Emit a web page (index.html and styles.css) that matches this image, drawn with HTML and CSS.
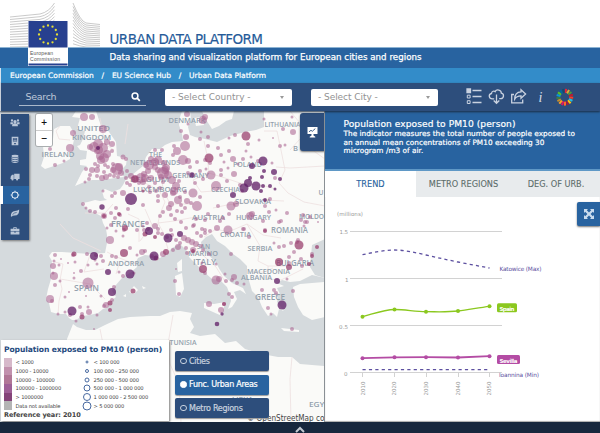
FILE: index.html
```html
<!DOCTYPE html>
<html lang="en">
<head>
<meta charset="utf-8">
<title>Urban Data Platform</title>
<link rel="stylesheet" href="styles.css">
</head>
<body>
<header class="masthead">
  <svg class="logo" width="100" height="67" viewBox="0 0 100 67">
    <clipPath id="above-band"><rect width="100" height="47"/></clipPath>
    <g id="logo-lines" clip-path="url(#above-band)"></g>
    <rect x="28" y="21" width="40" height="45" fill="#fff"/>
    <rect x="28.5" y="21" width="39" height="26.500" fill="#27408f"/>
    <rect x="28.500" y="63.500" width="39" height="2" fill="#27408f"/>
    <g id="stars" fill="#e8e034"></g>
    <text x="30" y="54.500" textLength="23">European</text>
    <text x="30" y="60.500" textLength="30">Commission</text>
  </svg>
  <h1 class="title">URBAN DATA PLATFORM</h1>
  <p class="tagline">Data sharing and visualization platform for European cities and regions</p>
</header>
<nav class="crumbs"><a>European Commission</a><i>/</i><a>EU Science Hub</a><i>/</i><a>Urban Data Platform</a></nav>
<div class="toolbar">
  <div class="search"><span>Search</span>
    <svg width="10" height="10" viewBox="0 0 10 10" fill="none" stroke="#fff"><circle cx="4" cy="4" r="2.900" stroke-width="1.500"/><path d="M6.200 6.200L8.800 8.800" stroke-width="1.800"/></svg>
  </div>
  <div class="select country"><span>- Select Country -</span><b></b></div>
  <div class="select city"><span>- Select City -</span><b></b></div>
  <svg class="tools" width="110" height="22" viewBox="465 87 110 22" fill="none" stroke="#c9d2e0" stroke-width="1.300">
    <path d="M472.500 91.500h9M472.500 97.500h9M472.500 103.500h9"/>
    <path d="M467 90h3.500v3.500h-3.500z" fill="#c9d2e0"/><path d="M467.300 96.200h2.800v2.800h-2.800zM467.300 101.700h2.800v2.800h-2.800z" stroke-width="1"/>
    <path d="M494.200 99.800h-1.700c-4 0-4.200-4.800-1-5.300c.2-2.500 2.800-2.900 3.600-1.900c1.500-2.800 6.200-1.900 6.200 1.500c3.300.6 2.700 5.500-.6 5.500h-1.500M496.500 95.500v8.500M493.700 101.500l2.800 2.800l2.800-2.800"/>
    <path d="M514 95.500h-2.300v8.300h11v-3.300"/><path d="M521 90.700l4.600 4.300l-4.600 4.300v-2.400c-3 0-5 .9-6.300 3.200c0-4.300 2.300-7 6.300-7.200z"/>
    <text x="538.500" y="102.500">i</text>
    <g id="wheel" stroke-width="4"></g>
  </svg>
</div>
<main class="workspace">
  <section class="map">
    <svg class="canvas" width="325" height="311" viewBox="0 112 325 311">
      <rect y="112" width="325" height="311" fill="#d5dadd"/>
      <g fill="#fafaf8">
        <path d="M76 112L72 118L80 119L77 130L85 132L83 140L80 146L77 147L80 151L87 152L86 160L80 161L80 166L87 167L82 173L75 187L82 184L92 181L103 181L115 179L124 178L120 172L126 166L127 159L117 157L116 143L107 130L101 127L96 112z"/>
        <path d="M60 127L70 127L75 136L72 150L70 160L63 164L45 170L41 167L44 158L43 147L53 140L54 130z"/>
        <path d="M182 112L180 118L179 126L182 135L183 142L172 143L165 146L160 150L152 150L146 158L143 167L138 171L132 176L126 180L123 186L120 190L112 193L105 190L102 192L104 199L107 201L100 202L95 201L88 203L82 204L84 207L88 211L95 214L101 217L103 224L106 230L107 236L107 244L105 254L90 255L76 254L62 253L52 253L49 257L52 262L51 270L51 280L48 290L46 300L49 304L51 313L58 315L66 315L69 319L72 321L76 321L82 317L90 316L98 314L103 310L108 308L110 303L116 298L112 292L115 287L122 279L130 274L137 268L136 263L138 259L145 256L153 257L160 259L167 254L172 249L180 245L188 253L189 258L196 265L203 272L212 280L220 281L227 288L230 296L231 302L228 310L232 308L237 300L234 293L240 291L246 295L243 289L232 284L224 277L220 271L215 262L206 254L202 250L201 243L206 238L212 235L217 242L225 247L233 255L240 260L247 267L247 275L250 285L252 292L258 298L262 308L268 317L273 314L277 318L279 310L284 312L277 303L278 299L273 293L280 295L277 289L284 287L277 284L282 281L290 283L300 282L312 276L325 279V240L315 248L312 257L311 268L316 276L325 279V112H264L264 128L256 131L245 133L230 137L217 143L205 140L195 138L190 136L188 128L191 120L190 112z"/>
        <path d="M202 112L205 119L212 130L219 127L226 122L232 120L234 112zM194 119L202 118L204 126L196 127zM310 240L325 240V246L311 262z"/>
        <path d="M293 288L300 285L325 283V318L312 321L303 316L298 308L294 298z"/>
        <path d="M60 423L67 340L73 325L77 328L86 331L95 331L105 326L118 320L130 318L150 317L160 317L170 313L180 312L192 314L190 320L194 328L190 334L200 337L215 335L225 344L236 342L245 350L262 355L278 358L292 358L300 365L325 367V423z"/>
        <path d="M175 277L182 274L184 290L180 298L176 296zM177 264L182 260L182 272L178 273zM204 304L214 305L225 303L222 317L213 313L204 309zM129 293L134 287L138 291L134 295zM281 329L290 330L299 331L299 333L284 332zM142 287L146 289L143 290zM123 297l3 -2l0 3z"/>
      </g>
      <path d="M312 246L325 240V279L315 276L310 268z" fill="#d5dadd"/>
      <path class="borders" d="M107 253L117 258L127 262L137 265M55 263L63 265L60 281L62 290L59 302L58 315M136 179L143 183L153 188L160 193L165 203L160 215L158 224L163 233L168 250M147 167L153 171L161 174L163 190L170 205L186 205L194 205M204 142L207 156L209 174L193 181L201 193L213 192M209 174L225 179L240 184L265 187L276 190M264 132L277 132L282 156L285 171L279 184L288 194L304 203L325 207M213 209L227 206L243 204L263 201L284 202M204 238L216 230L228 233L247 225L263 236L281 239M247 225L260 247L258 262L268 267L286 267L302 263M252 273L264 273L273 269M268 267L268 280L281 281L303 270M290 112L305 130L308 148L325 160M276 168L290 169L325 167M300 140L290 151M60 127L56 132L59 140L70 141M158 224L174 222L190 219L205 218M60 225L73 239L101 252M128 215L139 220L139 243M145 210L152 226L140 242M85 214L105 214L113 205M100 330L103 345M173 316L168 345L170 365L179 385L181 423M292 358L290 380L291 423M60 280L90 285L105 300M90 256L84 273L104 270M120 262L116 275M195 249L216 268L226 284M180 240L195 248M128 125L125 145M100 119L105 145L114 151"/>
      <g class="labels">
        <text x="77" y="132" textLength="33" lengthAdjust="spacingAndGlyphs">UNITED</text><text x="72" y="140.500" textLength="39" lengthAdjust="spacingAndGlyphs">KINGDOM</text>
        <text x="41.500" y="158" textLength="33" lengthAdjust="spacingAndGlyphs">IRELAND</text><text x="168.500" y="123.500" textLength="37" lengthAdjust="spacingAndGlyphs">DENMARK</text>
        <text x="264.500" y="128" textLength="36" lengthAdjust="spacingAndGlyphs">LITHUANIA</text><text x="149" y="158" textLength="13" lengthAdjust="spacingAndGlyphs">THE</text>
        <text x="130" y="165.500" textLength="50" lengthAdjust="spacingAndGlyphs">NETHERLANDS</text><text x="130" y="183" textLength="39" lengthAdjust="spacingAndGlyphs">BELGIUM</text>
        <text x="133" y="192.500" textLength="54" lengthAdjust="spacingAndGlyphs">LUXEMBOURG</text><text x="172" y="179" textLength="37" lengthAdjust="spacingAndGlyphs">GERMANY</text>
        <text x="233" y="167.500" textLength="29" lengthAdjust="spacingAndGlyphs">POLAND</text><text x="211" y="192.500" textLength="29" lengthAdjust="spacingAndGlyphs">CZECHIA</text>
        <text x="235" y="204.500" textLength="36" lengthAdjust="spacingAndGlyphs">SLOVAKIA</text><text x="111" y="227.500" textLength="34" lengthAdjust="spacingAndGlyphs" class="lg">FRANCE</text>
        <text x="192" y="221" textLength="33" lengthAdjust="spacingAndGlyphs">AUSTRIA</text><text x="236" y="221" textLength="35" lengthAdjust="spacingAndGlyphs">HUNGARY</text>
        <text x="299" y="220" textLength="25" lengthAdjust="spacingAndGlyphs">MOLDO</text><text x="293" y="151.500" textLength="5" lengthAdjust="spacingAndGlyphs">B</text><text x="318.500" y="196" textLength="5" lengthAdjust="spacingAndGlyphs">U</text>
        <text x="271" y="233.500" textLength="37" lengthAdjust="spacingAndGlyphs" class="lg">ROMANIA</text><text x="220" y="237.500" textLength="31" lengthAdjust="spacingAndGlyphs">CROATIA</text>
        <text x="247.500" y="251.500" textLength="25" lengthAdjust="spacingAndGlyphs">SERBIA</text><text x="197" y="250" textLength="13" lengthAdjust="spacingAndGlyphs">SAN</text><text x="188" y="256.800" textLength="30" lengthAdjust="spacingAndGlyphs">MARINO</text>
        <text x="193" y="266" textLength="23" lengthAdjust="spacingAndGlyphs" class="lg">ITALY</text><text x="276" y="267" textLength="38" lengthAdjust="spacingAndGlyphs" class="lg">BULGARIA</text>
        <text x="247" y="275" textLength="43" lengthAdjust="spacingAndGlyphs">MACEDONIA</text><text x="241" y="281" textLength="31" lengthAdjust="spacingAndGlyphs">ALBANIA</text>
        <text x="255" y="300.500" textLength="30" lengthAdjust="spacingAndGlyphs" class="lg">GREECE</text><text x="108" y="267" textLength="36" lengthAdjust="spacingAndGlyphs">ANDORRA</text>
        <text x="74" y="291.500" textLength="25" lengthAdjust="spacingAndGlyphs" class="lg">SPAIN</text><text x="169.500" y="345.500" textLength="27" lengthAdjust="spacingAndGlyphs">TUNISIA</text>
        <text x="232" y="402.500" textLength="21" lengthAdjust="spacingAndGlyphs">LIBYA</text><text x="309" y="407.500" textLength="15.500" lengthAdjust="spacingAndGlyphs">EGY</text>
      </g>
      <g id="bubbles"></g>
      <text class="credit" x="247" y="422" textLength="77.500" lengthAdjust="spacingAndGlyphs">© OpenStreetMap co</text>
    </svg>
    <aside class="side">
      <a><svg viewBox="0 0 12 12"><path d="M1 3a1.400 1.400 0 1 1 2.800 0a1.400 1.400 0 0 1-2.800 0M8.200 3a1.400 1.400 0 1 1 2.800 0a1.400 1.400 0 0 1-2.800 0M4 4.500a2 2 0 1 1 4 0a2 2 0 0 1-4 0M.5 5h3v2.500h-3zM8.500 5h3v2.500h-3zM2.500 10q0-4 3.500-3.500q3.500-.5 3.500 3.500z"/></svg></a>
      <a><svg viewBox="0 0 12 12"><path fill-rule="evenodd" d="M2 1h8v10H2zM3.500 2.500v4h5v-4zM5 8.500v1.500h2V8.500z"/><path d="M4 3.500h4M4 5.500h4" stroke="#b9c6d8" stroke-width=".8"/></svg></a>
      <a><svg viewBox="0 0 12 12"><ellipse cx="6" cy="2.500" rx="4.200" ry="1.500"/><path d="M1.800 3.800q4.200 1.600 8.400 0v1.500q-4.200 1.700-8.400 0zM1.800 6.200q4.200 1.600 8.400 0v1.500q-4.200 1.700-8.400 0zM1.800 8.600q4.200 1.600 8.400 0v1q-4.200 2.500-8.400 0z"/></svg></a>
      <a><svg viewBox="0 0 12 12"><path d="M5 2h6.500v6.500H5zM1 5l1.500-1.800h2v5.300H.5z"/><circle cx="3" cy="9" r="1.300"/><circle cx="8.500" cy="9" r="1.300"/></svg></a>
      <a class="on"><svg viewBox="0 0 12 12"><circle cx="6" cy="6" r="3.700" fill="none" stroke="#e9f0f8" stroke-width="1.300"/><path d="M6 .8v1.500M6 9.700v1.500M.8 6h1.500M9.700 6h1.500M2.300 2.300l1 1M8.700 8.700l1 1M2.300 9.700l1-1M8.700 3.300l1-1" stroke="#e9f0f8"/></svg></a>
      <a><svg viewBox="0 0 12 12"><path d="M1 10Q.8 4 6 3.500Q9.500 3.500 11 1.800Q11.500 9 5.500 9Q3 9 2 10.500z"/><path d="M3 8Q5 5.500 8 5.300" fill="none" stroke="#2d4e7c" stroke-width=".8"/></svg></a>
      <a><svg viewBox="0 0 12 12"><path fill-rule="evenodd" d="M.7 3.200H4V1.500h4v1.700h3.300v3H.7zM5 2.300v.9h2v-.9zM.7 6.900H5v1h2v-1h4.300v3.300H.7z"/></svg></a>
    </aside>
    <div class="zoom"><button>+</button><button>−</button></div>
    <button class="present"><svg width="11" height="12" viewBox="0 0 11 12"><path d="M.5 1h10v7h-4v1.500l1.800 1.200v.8H2.700v-.8L4.500 9.500V8h-4z" fill="#fff"/><path d="M2 5.800l2-1.500l1.300 1l3-2.700" fill="none" stroke="#2d4e7c" stroke-width=".9"/></svg></button>
    <div class="legend">
      <h2>Population exposed to PM10 (person)</h2>
      <div class="scales">
        <ul class="colors"><li>&lt; 1000</li><li>1000 - 10000</li><li>10000 - 100000</li><li>100000 - 1000000</li><li>&gt; 1000000</li><li>Data not available</li></ul>
        <ul class="sizes"><li>&lt; 100 000</li><li>100 000 - 250 000</li><li>250 000 - 500 000</li><li>500 000 - 1 000 000</li><li>1 000 000 - 2 500 000</li><li>&gt; 5 000 000</li></ul>
      </div>
      <p>Reference year: 2010</p>
    </div>
    <div class="layers"><button><i></i>Cities</button><button class="on"><i></i>Func. Urban Areas</button><button><i></i>Metro Regions</button></div>
  </section>
  <section class="panel">
    <div class="intro"><h2>Population exposed to PM10 (person)</h2><p>The indicator measures the total number of people exposed to<br>an annual mean concentrations of PM10 exceeding 30<br>microgram /m3 of air.</p></div>
    <div class="tabs"><a class="on">TREND</a><a>METRO REGIONS</a><a>DEG. OF URB.</a></div>
    <svg class="chart" width="275" height="226" viewBox="325 197 275 226">
      <path d="M350 231.500H502M350 278.500H502M350 325.500H502M350 372.500H502M362.500 373v4M394.500 373v4M426.500 373v4M458.500 373v4M489.500 373v4" stroke="#d2d2d2" fill="none"/>
      <g class="axis"><text x="337" y="215.500" textLength="26">(millions)</text><text x="339.500" y="234" textLength="8.500">1.5</text><text x="345" y="281.500">1</text><text x="339" y="328.500" textLength="9">0.5</text><text x="344" y="375.500">0</text>
        <text transform="translate(364.500 395.500)rotate(-90)" textLength="14">2010</text><text transform="translate(396 395.500)rotate(-90)" textLength="14">2020</text><text transform="translate(428 395.500)rotate(-90)" textLength="14">2030</text><text transform="translate(459.500 395.500)rotate(-90)" textLength="14">2040</text><text transform="translate(491 395.500)rotate(-90)" textLength="14">2050</text></g>
      <g fill="none" stroke="#5d50a0" stroke-width="1.300" stroke-dasharray="3.200 3.200"><path d="M362.500 254.700C373 252.500 384 250 394.500 250S415 252.500 426 255S447 259.800 458 262S479 266 489.500 268"/><path d="M362.500 369.700H489.500"/></g>
      <g fill="#8bc81f" stroke="#8bc81f"><path fill="none" stroke-width="1.300" d="M362.500 316.700C373 314 384 309.600 394.500 309.500S415 311.700 426 311.700S447 312.300 458 311S479 307.500 489.500 306.300"/><g stroke="none"><circle cx="362.500" cy="316.700" r="2"/><circle cx="394.500" cy="309.600" r="2"/><circle cx="426" cy="311.700" r="2"/><circle cx="458" cy="311" r="2"/><circle cx="489.500" cy="306.300" r="2"/><rect x="497" y="303.300" width="20" height="9" rx="1.500"/></g></g>
      <g fill="#b44ca4" stroke="#b44ca4"><path fill="none" stroke-width="1.800" d="M362.500 358.200L394.500 357.300L426 357.200L458 357.500L489.500 356.200"/><g stroke="none"><circle cx="362.500" cy="358.200" r="2"/><circle cx="394.500" cy="357.300" r="2"/><circle cx="426" cy="357.200" r="2"/><circle cx="458" cy="357.500" r="2"/><circle cx="489.500" cy="356.200" r="2"/><rect x="497" y="355" width="23" height="9" rx="1.500"/></g></g>
      <g class="series"><text x="499.500" y="270.500" textLength="42">Katowice (Max)</text><text x="499" y="376.500" textLength="40">Ioannina (Min)</text><text class="tag" x="499.500" y="310.700" textLength="15">Spain</text><text class="tag" x="499.500" y="363" textLength="18">Sevilla</text></g>
    </svg>
    <button class="expand"><svg width="12" height="12" viewBox="0 0 12 12"><path d="M1 1h4L3.800 2.200L6 4.400l2.200-2.200L7 1h4v4L9.800 3.800L7.600 6l2.200 2.200L11 7v4H7l1.200-1.200L6 7.600L3.800 9.800L5 11H1V7l1.200 1.200L4.400 6L2.200 3.800L1 5z" fill="#c9dcee"/></svg></button>
  </section>
</main>
<footer class="drawer"><svg width="12" height="7" viewBox="0 0 12 7"><path d="M2 6L6 2l4 4" fill="none" stroke="#c3c9d1" stroke-width="2"/></svg></footer>
<script src="app.js"></script>
</body>
</html>
```
FILE: styles.css
```css
*, *::before { box-sizing: border-box; margin: 0; padding: 0; }
body { width: 600px; height: 433px; overflow: hidden; display: grid; grid-template-rows: 68px 15px 28px 311px 11px; font-family: "DejaVu Sans", sans-serif; background: #fff; }
h1, h2 { font-weight: normal; }
button { border: 0; font-family: inherit; display: flex; align-items: center; }
ul { list-style: none; }
i { font-style: normal; }

.masthead { position: relative; z-index: 3; padding-left: 109.500px; background: linear-gradient(#fff 47px, #8cb3d3 47px, #8cb3d3 48px, #2863a0 48px); }
.logo { position: absolute; left: 0; top: 0; }
.logo text { font: 5px "Liberation Sans", sans-serif; fill: #555; }
.title { height: 48px; padding-top: 29.500px; font-size: 13.500px; line-height: 18px; letter-spacing: -.53px; color: #255a99; -webkit-text-stroke: .15px; white-space: nowrap; }
.tagline { font-size: 8.700px; line-height: 19px; color: #fff; -webkit-text-stroke: .25px #fff; letter-spacing: .03px; white-space: nowrap; }
.crumbs { background: #338cc9; border-left: 1px solid #d6e3ee; color: #fff; display: flex; align-items: center; padding-left: 9px; font-size: 7.500px; -webkit-text-stroke: .2px #fff; white-space: nowrap; }
.crumbs i { width: 18px; text-align: center; }
.toolbar { position: relative; z-index: 2; background: #2d4e7c; border-left: 1px solid #c8cfd9; box-shadow: 0 1px 2px #1b2c42; display: flex; align-items: center; }
.search { width: 127px; height: 17px; margin-left: 18px; border-bottom: 1px solid #aab8cb; color: #bdc8d8; font-size: 9.500px; letter-spacing: -.3px; display: flex; align-items: center; justify-content: space-between; padding: 0 5px 0 6.500px; }
.select { height: 17px; width: 127px; border-radius: 2px; background: #fff; color: #929292; font-size: 9px; display: flex; align-items: center; justify-content: space-between; padding: 0 8px 0 7px; }
.country { margin-left: 19px; }
.city { margin-left: 19px; letter-spacing: -.05px; }
.select b { border: 2.500px solid transparent; border-top: 3px solid #999; border-bottom: 0; }
.tools { margin-left: 27px; }
.tools text { font: italic 14px "Liberation Serif", serif; fill: #d5dce7; stroke: none; }

.workspace { display: grid; grid-template-columns: 325px 275px; }
.map { position: relative; overflow: hidden; border-right: 1px solid #8a9095; }
.canvas { display: block; }
.borders { fill: none; stroke: #eedfe0; stroke-width: .8; }
.labels text { font: 600 7px "Open Sans", sans-serif; fill: #93a1ad; }
.labels .lg { font-size: 8px; }
.credit { font-size: 8px; fill: #444; }
.side { position: absolute; left: 1px; top: 3px; width: 28px; background: #2d4e7c; box-shadow: 1px 1px 2px #777; }
.side a { height: 18px; display: flex; align-items: center; justify-content: center; }
.side svg { width: 10px; height: 10px; fill: #b9c6d8; }
.side .on { background: #2863a0; border-left: 3px solid #fff; margin-left: -1px; padding-right: 2px; }
.zoom { position: absolute; left: 36px; top: 3px; width: 16px; border-radius: 2px; box-shadow: 0 0 0 1px #a9adaf; overflow: hidden; }
.zoom button { width: 16px; height: 16px; background: #fff; justify-content: center; font-size: 8px; font-weight: bold; color: #111; }
.zoom button + button { border-top: 1px solid #ccc; }
.present { position: absolute; left: 300px; top: 2px; width: 25px; height: 38px; justify-content: center; background: #2d4e7c; border-radius: 3px 0 0 3px; box-shadow: 0 1px 2px #777; }
.legend { position: absolute; left: 1px; top: 229px; width: 168px; height: 81px; background: #fff; box-shadow: 1px 1px 2px #777; padding: 4px 3px; color: #444; }
.legend h2 { font-size: 7.600px; line-height: 11px; font-weight: bold; color: #264b80; letter-spacing: -.1px; white-space: nowrap; }
.scales { display: grid; grid-template-columns: 77px 1fr; margin-top: 3px; }
.scales li { height: 8.700px; display: flex; align-items: center; font-size: 5.200px; white-space: nowrap; letter-spacing: -.16px; }
.colors li::before { content: ""; width: 8px; height: 8.700px; margin-right: 3.500px; background: #d6b9ca; }
.colors li:nth-child(2)::before { background: #c191ad; }
.colors li:nth-child(3)::before { background: #b07796; }
.colors li:nth-child(4)::before { background: #9d6096; }
.colors li:nth-child(5)::before { background: #844479; }
.colors li:nth-child(6)::before { background: #b4b4b4; }
.sizes li { position: relative; padding-left: 12.500px; }
.sizes li::before { content: ""; position: absolute; left: 5.500px; top: 50%; width: 3px; height: 3px; transform: translate(-50%, -50%); border: 1px solid #4769a0; border-radius: 50%; }
.sizes li:nth-child(2)::before { width: 4px; height: 4px; }
.sizes li:nth-child(3)::before { width: 5px; height: 5px; }
.sizes li:nth-child(4)::before { width: 7px; height: 7px; }
.sizes li:nth-child(5)::before { width: 8px; height: 8px; }
.sizes li:nth-child(6)::before { width: 9px; height: 9px; }
.legend p { font-size: 6.500px; font-weight: bold; line-height: 9px; margin-top: 1px; letter-spacing: -.1px; }
.layers { position: absolute; left: 175px; top: 240px; display: flex; flex-direction: column; gap: 3.500px; }
.layers button { width: 93.500px; height: 20px; padding-left: 5px; border-radius: 2px; background: #2d4e7c; color: #c8d2df; font-size: 8px; letter-spacing: -.27px; -webkit-text-stroke: .2px; box-shadow: 0 1px 1px #999; white-space: nowrap; }
.layers i { width: 6.500px; height: 6.500px; border: 1px solid; border-radius: 50%; margin-right: 2.500px; }
.layers .on { background: #2863a0; color: #fff; }
.layers .on i { background: #fff; }

.panel { position: relative; background: #fff; box-shadow: inset 0 -2px 1px #aaa; }
.intro { height: 60px; background: #2863a0; border-bottom: 2px solid #5f98c6; color: #fff; padding: 7px 0 0 18.500px; white-space: nowrap; }
.intro h2 { font-size: 9.100px; line-height: 12px; letter-spacing: .06px; -webkit-text-stroke: .2px; }
.intro p { font-size: 7.300px; line-height: 8.700px; letter-spacing: .04px; -webkit-text-stroke: .2px; }
.tabs { height: 26px; display: grid; grid-template-columns: 91px 97px 1fr; background: #e8ebed; color: #5c6d6b; font-size: 8.200px; -webkit-text-stroke: .1px; }
.tabs a { display: flex; align-items: center; justify-content: center; white-space: nowrap; }
.tabs a:nth-child(2) { padding-right: 2px; }
.tabs a:nth-child(3) { padding-right: 1px; }
.tabs .on { background: #fff; color: #2863a0; }
.chart { display: block; }
.axis text { font-size: 5.500px; fill: #999; }
.series text { font-size: 5.800px; fill: #5d50a0; }
.series .tag { font-size: 5.500px; font-weight: bold; fill: #fff; }
.expand { position: absolute; right: 0; top: 91px; width: 23px; height: 24px; background: #2863a0; justify-content: center; border-radius: 2px 0 0 2px; box-shadow: 0 1px 2px #777; }
.drawer { position: relative; background: #17273d; display: flex; justify-content: center; align-items: flex-end; }
```
FILE: app.js
```js
const NS = "http://www.w3.org/2000/svg";
function add(parent, name, attrs) {
  const el = document.createElementNS(NS, name);
  for (const k in attrs) el.setAttribute(k, attrs[k]);
  parent.appendChild(el);
}

// Flowing lines behind the flag
const lines = document.getElementById("logo-lines");
for (let i = 0; i < 13; i++) {
  add(lines, "path", {
    d: `M10 ${17 + i * 2.5}L40 ${14 + i * 2.7}Q49 ${12 + i * 2.8} 54.500 ${3 + i * 3.4}M73 ${3 + i * 3.4}Q80 ${21 + i * 2.1} 86 ${23 + i * 2}L100 ${24.500 + i * 1.9}`,
    fill: "none", stroke: "#bdbdbd", "stroke-width": 0.8
  });
}
const stars = document.getElementById("stars");
for (let i = 0; i < 12; i++) {
  const a = i * Math.PI / 6;
  add(stars, "circle", { cx: 48 + 9 * Math.sin(a), cy: 34.5 - 9 * Math.cos(a), r: 1.15 });
}

// Goal wheel
const hues = ["#e5243b", "#dda63a", "#4c9f38", "#c5192d", "#ff3a21", "#26bde2", "#fcc30b", "#a21942", "#fd6925", "#dd1367", "#fd9d24", "#bf8b2e", "#3f7e44", "#0a97d9", "#56c02b", "#00689d", "#19486a"];
const wheel = document.getElementById("wheel");
hues.forEach((c, i) => {
  const a = i * 2 * Math.PI / 17, b = a + 0.32;
  add(wheel, "path", { stroke: c, d: `M${564.8 + 6.5 * Math.sin(a)} ${98.2 - 6.5 * Math.cos(a)}L${564.8 + 6.5 * Math.sin(b)} ${98.2 - 6.5 * Math.cos(b)}` });
});

// Urban areas: x, y, radius triples per value class
const areas = {
  "#a96390": `84 118 4 92 118 3 103 130 4 73 134 3 70 149 4 50 150 2 55 166 2 64 162 1.500 112 145 3 94 148 5 98 145 5 103 149 5 99 151 4 90 148 3 107 143 3 112 152 2 100 157 4 104 159 5 107 155 4 101 161 4 97 152 3 117 170 6 119 168 4 113 171 3 110 176 2 106 178 3 102 179 3 97 177 2 89 180 2 90 176 2 86 170 2 92 171 3 97 171 3 98 167 2 104 173 2 108 168 2 113 165 2 121 174 3 123 158 2.500 126 160 2 114 177 2 118 178 2 105 166 2 95 165 2 85 183 1.500 127 172 2
   155 151 2 162 151 2 151 160 3 155 163 4 149 166 5 158 161 4 146 166 3 163 174 6 165 171 4 161 178 3 158 171 3 155 168 3 148 172 3 144 175 3 141 179 5 135 180 4 145 179 4 131 177 3 126 179 2 151 179 3 155 184 2 156 192 2 158 197 2 163 183 2 165 196 3 160 189 2 149 188 2 143 183 3 139 184 2 130 186 2 127 184 2 123 194 3 115 194 2 112 197 2 103 192 1.500 83 205 2 86 209 1.500 90 212 2 95 213 2 104 217 3 111 214 2 116 209 2 120 216 2 128 210 2 143 206 2 150 193 2 158 202 2 160 217 2 107 229 1.500 111 226 2 115 219 2 124 231 2 123 237 1.500 137 231 2 144 231 2 147 224 2 158 230 2 143 227 1.500 110 241 4 112 257 2 116 258 2 103 262 2 101 257 2 87 255 2 137 256 1.500 142 253 3 145 252 2 152 257 2 163 255 3 148 230 2 155 227 3 158 234 2 116 232 1.500 130 249 2
   55 256 2 61 260 1 54 262 1.500 53 267 3 59 266 1.500 53 274 1.500 54 277 4 55 286 2 50 300 4 52 302 2 60 282 1.500 65 298 1.500 69 293 1 74 279 1.500 74 274 1 68 264 1 75 263 1.500 73 256 2 88 266 1.500 81 272 2 88 284 5.500 96 256 2 95 261 1.500 97 265 1.500 101 297 1.500 86 297 1 114 288 2 104 307 2 106 306 3 112 301 2 97 316 1.500 89 313 3 82 315 2 88 308 1.500 80 308 2 65 313 1.500 58 315 1.500 70 316 2 76 322 1.500 123 277 2 134 274 1.500 94 330 1 119 273 1.500
   187 115 3 203 121 4 205 118 3 188 125 1.500 181 132 2 186 138 3 200 140 2 208 138 2 185 147 5 177 152 4 174 147 2 173 156 2 183 161 5 188 162 3 208 147 2 218 149 2 201 133 1.500 235 136 2 229 139 1.500 259 141 1.500 273 139 1 280 147 2 283 130 2 293 133 3 264 120 1.500 292 118 1.500 285 146 1.500 164 164 3 166 169 4 168 176 4 172 181 4 176 187 4 174 192 4 179 182 2 178 201 4 180 198 2 171 205 3 169 209 3 163 213 2 173 194 3 193 194 4.500 211 176 4.500 216 187 5 197 207 5 191 204 2 188 174 2 190 168 2 197 163 2 205 161 2 200 172 2 206 170 1.500 210 164 2 203 180 2 195 184 2 185 193 2 200 198 2 221 171 2 221 176 2 227 182 2 224 163 1.500 221 156 2 233 160 3 229 152 2 228 169 1.500 234 175 3 238 165 1.500 243 160 2 248 145 2 246 152 1.500 251 158 1.500 258 162 2 272 164 1.500 275 179 2 270 200 2 240 186 2 242 192 2 231 207 4.500 236 205 3 229 215 2 218 207 2 220 222 2 208 215 2 205 221 2 196 220 2 182 213 2 177 212 2 181 206 2 187 202 3 185 209 2 171 216 2 175 220 2 202 230 2 217 229 3 228 231 4.500 223 219 2 244 230 2 250 217 4 252 215 3 263 222 2 265 207 2 276 211 1.500 287 214 2 279 223 2 265 231 2 281 222 2 301 221 2 303 216 2 307 223 2 304 227 1.500 269 213 2
   181 223 2 186 229 2 193 227 2 197 234 2 201 237 2 205 234 2 176 241 2 180 244 2 184 239 3 188 241 3 192 243 3 196 245 3 201 247 2 193 251 3 178 248 3 173 251 2 172 236 2 167 238 2 162 235 2 186 249 2 187 254 2 210 232 2 171 231 2 194 226 2 205 231 2 203 251 2 209 255 2 231 255 2 202 264 1.500 216 265 1.500 216 281 4.500 219 280 3 225 275 1.500 234 278 3 226 282 2 232 281 2 237 284 2 244 285 1.500 229 295 2 232 298 2 209 305 3 221 311 3 224 305 2 205 274 2 176 270 1 175 282 2 179 295 2 243 230 2 249 238 2 279 248 2 284 247 2 291 244 2 297 243 2 294 253 2 289 258 2 301 260 2 302 267 2 289 264 2 298 241 2 312 255 2 305 223 2 293 292 2 274 291 2 268 309 2 271 315 1.500 292 330 2 262 291 2 276 294 2 287 280 1.500 274 244 1.500 310 218 2 318 223 1`,
  "#99406f": `246 137 4.500 209 159 4.500 125 229 3 124 254 4 203 270 4 299 246 4.500 279 263 4 289 268 3 309 265 2 317 248 2 133 292 2.500 156 259 2.500 166 253 3 110 304 2.500 82 318 2.500 135 180 3.500 104 217 2 119 215 2 155 238 2 145 235 2.500 193 252 2 224 305 2 110 311 2 143 192 1.500 74 255 2.500 312 257 2 265 232 2`,
  "#5f1c66": `131 200 6 102 208 2.700 149 232 4 168 239 4.500 94 257 4 154 257 4.500 108 273 3 130 275 4.500 112 293 4 72 312 4.500 98 149 2 192 176 2.700 180 235 3 263 162 4.500 252 167 3 264 172 2 274 173 3 262 178 2 250 179 2 248 184 4 244 189 4.500 256 187 4.500 261 192 2 263 187 2 270 187 2 275 190 1.500 280 180 2 265 201 2 233 196 3 277 282 3 282 306 4.500 217 325 2.300 222 315 1.700`
};
const layer = document.getElementById("bubbles");
for (const color in areas) {
  const v = areas[color].trim().split(/\s+/).map(Number);
  for (let i = 0; i < v.length; i += 3) {
    add(layer, "circle", { cx: v[i], cy: v[i + 1], r: v[i + 2], fill: color, "fill-opacity": color === "#a96390" ? 0.57 : 0.75 });
  }
}
```
